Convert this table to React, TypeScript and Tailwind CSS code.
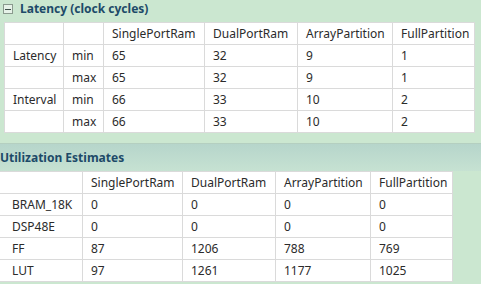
const latencyCols = ['', '', 'SinglePortRam', 'DualPortRam', 'ArrayPartition', 'FullPartition'];

const latencyRows = [
  ['Latency', 'min', '65', '32', '9', '1'],
  ['', 'max', '65', '32', '9', '1'],
  ['Interval', 'min', '66', '33', '10', '2'],
  ['', 'max', '66', '33', '10', '2'],
];

const utilCols = ['', 'SinglePortRam', 'DualPortRam', 'ArrayPartition', 'FullPartition'];

const utilRows = [
  ['BRAM_18K', '0', '0', '0', '0'],
  ['DSP48E', '0', '0', '0', '0'],
  ['FF', '87', '1206', '788', '769'],
  ['LUT', '97', '1261', '1177', '1025'],
];

function Cell({ text, wide }: { text: string; wide?: boolean }) {
  return (
    <div
      className={`flex h-[22px] items-center truncate border-b border-r border-[#dadada] bg-white pr-1 text-[12px] text-[#2b2b2b] ${
        wide ? 'pl-[12px]' : 'pl-[8px]'
      }`}
    >
      {text}
    </div>
  );
}

export default function App() {
  return (
    <div
      className="flex h-[284px] w-[481px] flex-col overflow-hidden bg-[#cbe7d0]"
      style={{ fontFamily: '"Noto Sans", "Open Sans", sans-serif' }}
    >
      {/* Latency section */}
      <div className="flex h-[18px] items-center gap-[7px] pl-[3px]">
        <span className="flex size-[10px] items-center justify-center border border-[#8a9a8e] bg-[#e6f2e8]">
          <span className="h-px w-[6px] bg-[#40504a]" />
        </span>
        <span className="text-[12px] font-bold text-[#1d4a68]">Latency (clock cycles)</span>
      </div>
      <div className="ml-[4px] mt-[4px] grid w-fit grid-cols-[59px_40px_101px_93px_95px_82px] border-l border-t border-[#dadada]">
        {latencyCols.map((c, i) => (
          <Cell key={`h${i}`} text={c} />
        ))}
        {latencyRows.map((row, r) =>
          row.map((c, i) => <Cell key={`${r}-${i}`} text={c} />),
        )}
      </div>

      {/* Utilization section */}
      <div className="mt-[10px] flex h-[28px] items-center border-t border-[#b4cfc0] bg-gradient-to-b from-[#b6d5cb] to-[#c6e2d2]">
        <span className="text-[12px] font-bold text-[#1d4a68]">Utilization Estimates</span>
      </div>
      <div className="grid w-fit grid-cols-[83px_100px_93px_95px_82px] border-t border-[#dadada]">
        {utilCols.map((c, i) => (
          <Cell key={`uh${i}`} text={c} wide={i === 0} />
        ))}
        {utilRows.map((row, r) =>
          row.map((c, i) => <Cell key={`u${r}-${i}`} text={c} wide={i === 0} />),
        )}
      </div>
    </div>
  );
}
